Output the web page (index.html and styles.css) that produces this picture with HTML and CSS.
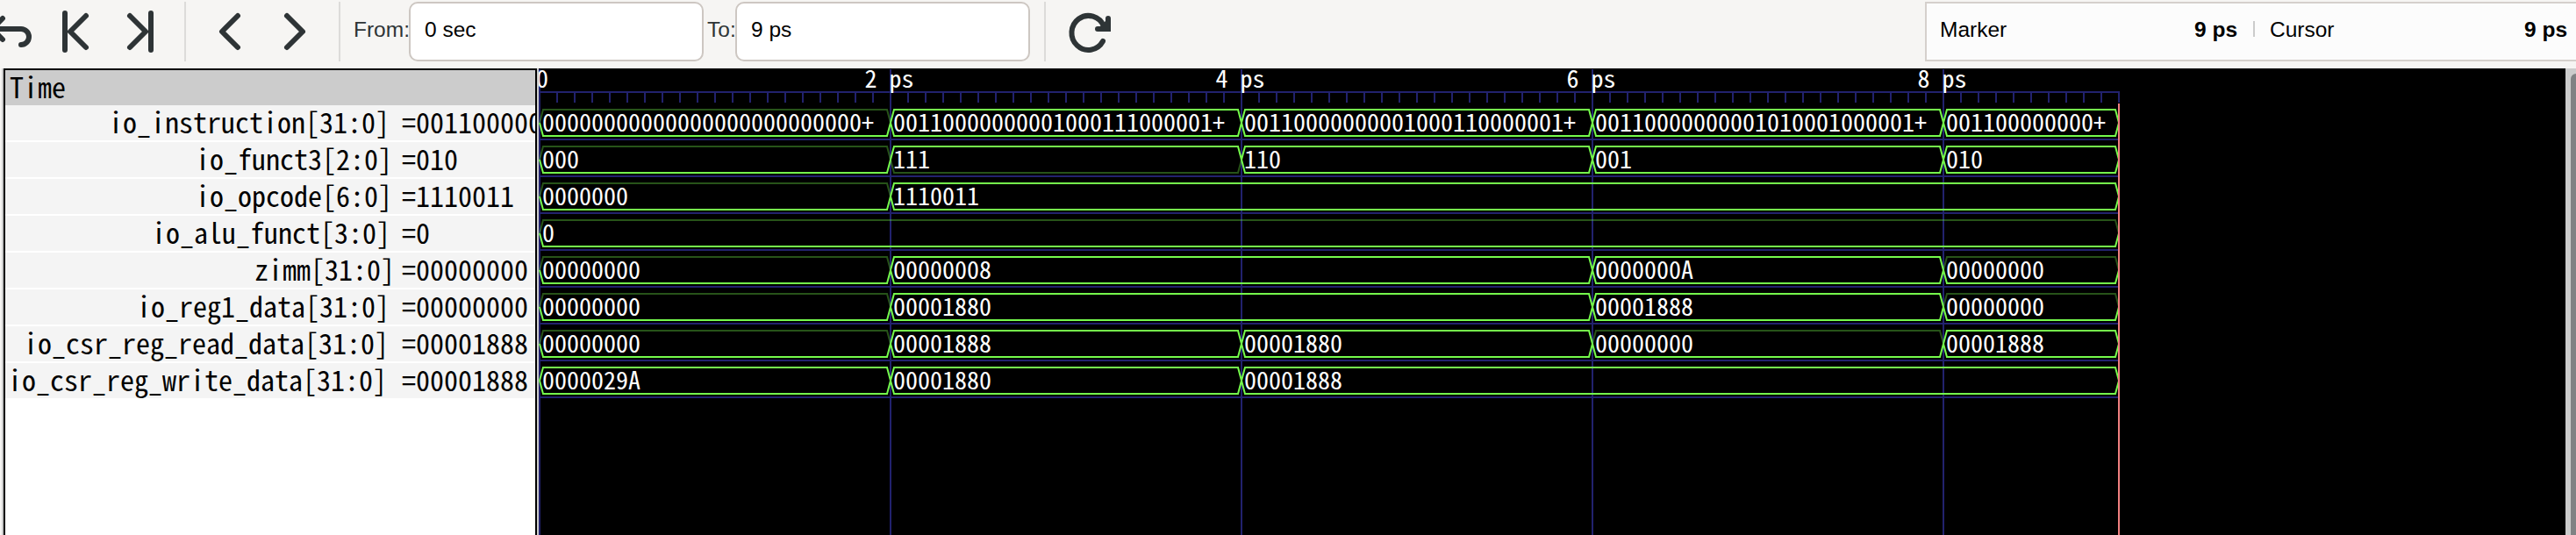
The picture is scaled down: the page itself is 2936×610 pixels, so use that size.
FILE: index.html
```html
<!DOCTYPE html>
<html lang="en">
<head>
<meta charset="utf-8">
<title>Waveform viewer</title>
<link rel="stylesheet" href="styles.css">
</head>
<body>
<header class="toolbar">
  <svg class="icons nav-ends" width="210" height="78" viewBox="0 0 210 78">
    <path d="M3 21 L-9 33 L3 45 M-9 33 H24 A9 9 0 0 1 24 51"/>
    <path d="M74 15 V57 M98 18 L80 36 L98 54"/>
    <path d="M148 18 L166 36 L148 54 M172 15 V57"/>
  </svg>
  <span class="divider"></span>
  <svg class="icons" width="174" height="78" viewBox="212 0 174 78">
    <path d="M271 18 L253 36 L271 54"/>
    <path d="M327 18 L345 36 L327 54"/>
  </svg>
  <span class="divider"></span>
  <label class="label label-from">From:</label>
  <div class="entry">0 sec</div>
  <label class="label label-to">To:</label>
  <div class="entry">9 ps</div>
  <span class="divider divider-last"></span>
  <svg class="icons" width="90" height="78" viewBox="1192 0 90 78">
    <path d="M1257 47 A19 19.5 0 1 1 1258 30"/>
    <path class="arrow" d="M1263 21 V33 H1251"/>
  </svg>
  <div class="readout">
    <span class="readout-name">Marker</span><b>9 ps</b>
    <i class="readout-sep"></i>
    <span class="readout-name">Cursor</span><b>9 ps</b>
  </div>
</header>
<main class="main">
  <section class="signals">
    <div class="time">Time</div>
    <div class="row"><span class="name" style="padding-left:118px">io_instruction[31:0]</span><span class="value">=001100000</span></div>
    <div class="row"><span class="name" style="padding-left:217px">io_funct3[2:0]</span><span class="value">=010</span></div>
    <div class="row"><span class="name" style="padding-left:217px">io_opcode[6:0]</span><span class="value">=1110011</span></div>
    <div class="row"><span class="name" style="padding-left:167px">io_alu_funct[3:0]</span><span class="value">=0</span></div>
    <div class="row"><span class="name" style="padding-left:284px">zimm[31:0]</span><span class="value">=00000000</span></div>
    <div class="row"><span class="name" style="padding-left:150px">io_reg1_data[31:0]</span><span class="value">=00000000</span></div>
    <div class="row"><span class="name" style="padding-left:21px">io_csr_reg_read_data[31:0]</span><span class="value">=00001888</span></div>
    <div class="row"><span class="name" style="padding-left:3px">io_csr_reg_write_data[31:0]</span><span class="value">=00001888</span></div>
  </section>
  <svg class="waves" width="2310" height="532" viewBox="614 78 2310 532">
    <defs>
      <pattern id="ticks" x="614" y="106" width="20" height="11" patternUnits="userSpaceOnUse"><rect class="tick" width="2" height="11"/></pattern>
      <!-- bus segments, named by width: upper rail, then lower rail -->
      <g id="s200"><path class="top" d="M0 140 L4 125 H196 L200 140"/><path class="bot" d="M0 140 L4 155 H196 L200 140"/></g>
      <g id="s400"><path class="top" d="M0 140 L4 125 H396 L400 140"/><path class="bot" d="M0 140 L4 155 H396 L400 140"/></g>
      <g id="s800"><path class="top" d="M0 140 L4 125 H796 L800 140"/><path class="bot" d="M0 140 L4 155 H796 L800 140"/></g>
      <g id="s1000"><path class="top" d="M0 140 L4 125 H996 L1000 140"/><path class="bot" d="M0 140 L4 155 H996 L1000 140"/></g>
      <g id="s1400"><path class="top" d="M0 140 L4 125 H1396 L1400 140"/><path class="bot" d="M0 140 L4 155 H1396 L1400 140"/></g>
      <g id="s1800"><path class="top" d="M0 140 L4 125 H1796 L1800 140"/><path class="bot" d="M0 140 L4 155 H1796 L1800 140"/></g>
    </defs>
    <path class="grid" d="M615 79 V610 M1015 79 V610 M1415 79 V610 M1815 79 V610 M2215 79 V610"/>
    <path class="grid" d="M614 105 H2416 M614 159 H2415 M614 201 H2415 M614 243 H2415 M614 285 H2415 M614 327 H2415 M614 369 H2415 M614 411 H2415 M614 453 H2415"/>
    <rect x="614" y="106" width="1802" height="11" fill="url(#ticks)"/>
    <text x="611" y="100">0</text>
    <text x="985.5" y="100">2 ps</text>
    <text x="1385.5" y="100">4 ps</text>
    <text x="1785.5" y="100">6 ps</text>
    <text x="2185.5" y="100">8 ps</text>
    <g>
      <use href="#s400" x="615" class="zero"/><use href="#s400" x="1015"/><use href="#s400" x="1415"/><use href="#s400" x="1815"/><use href="#s200" x="2215"/>
      <text x="618" y="150">00000000000000000000000000+</text>
      <text x="1018" y="150">00110000000001000111000001+</text>
      <text x="1418" y="150">00110000000001000110000001+</text>
      <text x="1818" y="150">00110000000001010001000001+</text>
      <text x="2218" y="150">001100000000+</text>
    </g>
    <g transform="translate(0 42)">
      <use href="#s400" x="615" class="zero"/><use href="#s400" x="1015" class="ones"/><use href="#s400" x="1415"/><use href="#s400" x="1815"/><use href="#s200" x="2215"/>
      <text x="618" y="150">000</text><text x="1018" y="150">111</text><text x="1418" y="150">110</text><text x="1818" y="150">001</text><text x="2218" y="150">010</text>
    </g>
    <g transform="translate(0 84)">
      <use href="#s400" x="615" class="zero"/><use href="#s1400" x="1015"/>
      <text x="618" y="150">0000000</text><text x="1018" y="150">1110011</text>
    </g>
    <g transform="translate(0 126)">
      <use href="#s1800" x="615" class="zero"/>
      <text x="618" y="150">0</text>
    </g>
    <g transform="translate(0 168)">
      <use href="#s400" x="615" class="zero"/><use href="#s800" x="1015"/><use href="#s400" x="1815"/><use href="#s200" x="2215" class="zero"/>
      <text x="618" y="150">00000000</text><text x="1018" y="150">00000008</text><text x="1818" y="150">0000000A</text><text x="2218" y="150">00000000</text>
    </g>
    <g transform="translate(0 210)">
      <use href="#s400" x="615" class="zero"/><use href="#s800" x="1015"/><use href="#s400" x="1815"/><use href="#s200" x="2215" class="zero"/>
      <text x="618" y="150">00000000</text><text x="1018" y="150">00001880</text><text x="1818" y="150">00001888</text><text x="2218" y="150">00000000</text>
    </g>
    <g transform="translate(0 252)">
      <use href="#s400" x="615" class="zero"/><use href="#s400" x="1015"/><use href="#s400" x="1415"/><use href="#s400" x="1815" class="zero"/><use href="#s200" x="2215"/>
      <text x="618" y="150">00000000</text><text x="1018" y="150">00001888</text><text x="1418" y="150">00001880</text><text x="1818" y="150">00000000</text><text x="2218" y="150">00001888</text>
    </g>
    <g transform="translate(0 294)">
      <use href="#s400" x="615"/><use href="#s400" x="1015"/><use href="#s1000" x="1415"/>
      <text x="618" y="150">0000029A</text><text x="1018" y="150">00001880</text><text x="1418" y="150">00001888</text>
    </g>
    <path class="marker" d="M2415 118 V610"/>
  </svg>
  <div class="scroll"><div class="thumb"></div></div>
</main>
</body>
</html>
```
FILE: styles.css
```css
* { box-sizing: border-box; }

body {
  margin: 0;
  width: 2936px;
  height: 610px;
  overflow: hidden;
  background: #f6f5f3;
  color: #000;
  font-family: "Liberation Sans", Arial, sans-serif;
}

.toolbar {
  display: flex;
  height: 78px;
  font-size: 24.5px;
  line-height: 60px;
  white-space: nowrap;
}

.toolbar > * { flex-shrink: 0; }

.icons path {
  fill: none;
  stroke: #2e3436;
  stroke-width: 6;
  stroke-linecap: round;
  stroke-linejoin: round;
}

.icons .arrow { stroke-linejoin: miter; fill: #2e3436; }

.divider {
  width: 2px;
  height: 68px;
  margin-top: 2px;
  background: #dcdbd9;
}

.label { padding-top: 4px; color: #2e3436; }
.label-from { width: 78px; padding-left: 15px; }
.label-to { width: 36px; padding-left: 4px; }

.entry {
  width: 336px;
  height: 68px;
  margin-top: 2px;
  padding-left: 16px;
  border: 2px solid #cdc7c2;
  border-radius: 10px;
  background: #fff;
}

.divider-last { margin-left: 16px; }

.readout {
  display: flex;
  width: 760px;
  height: 68px;
  margin: 2px 0 0 912px;
  padding-left: 15px;
  border: 2px solid #d5d0cc;
  background: #fcfcfc;
}

.readout-name { width: 290px; }
.readout b { width: 49px; text-align: right; }

.readout-sep {
  width: 2px;
  height: 18px;
  margin: 20px 17px 0 18px;
  background: #ccc;
}

.main { display: flex; height: 532px; overflow: hidden; }

.signals {
  width: 612px;
  height: 532px;
  margin-left: 2px;
  border-left: 2px solid #ccc;
  border-right: 2px solid #ccc;
  background: #fff;
  box-shadow: inset 2px 2px #000, inset -2px 0 #000;
  padding: 2px 2px 0;
  font: 32px/36px "Noto Sans Mono CJK SC", "DejaVu Sans Mono", monospace;
  font-variant-numeric: slashed-zero;
  flex-shrink: 0;
}

.time { height: 40px; padding-left: 5px; background: #ccc; }

.row {
  display: flex;
  height: 40px;
  margin-bottom: 2px;
  overflow-x: clip;
  background: #f4f4f4;
}

.time, .name, .value { white-space: nowrap; }
.name { flex: 0 0 452px; }

.waves { flex-shrink: 0; background: #000; }

.waves text {
  fill: #fff;
  font: 28px "Noto Sans Mono CJK SC", "DejaVu Sans Mono", monospace;
  font-variant-numeric: slashed-zero;
}

.waves use { --top: #75fb4c; --bot: #75fb4c; }
.waves .zero { --top: rgba(117, 251, 76, .33); }
.waves .ones { --bot: rgba(117, 251, 76, .33); }

.top, .bot, .grid, .marker { fill: none; stroke-width: 2; }
.top { stroke: var(--top); }
.bot { stroke: var(--bot); }
.grid { stroke: #22226e; }
.tick { fill: #22226e; }
.marker { stroke: #f08080; }

.scroll { width: 12px; height: 532px; padding: 6px 0 0 6px; background: #ccc; overflow: hidden; }
.thumb { width: 12px; height: 540px; border-radius: 6px; background: #808284; }
```
